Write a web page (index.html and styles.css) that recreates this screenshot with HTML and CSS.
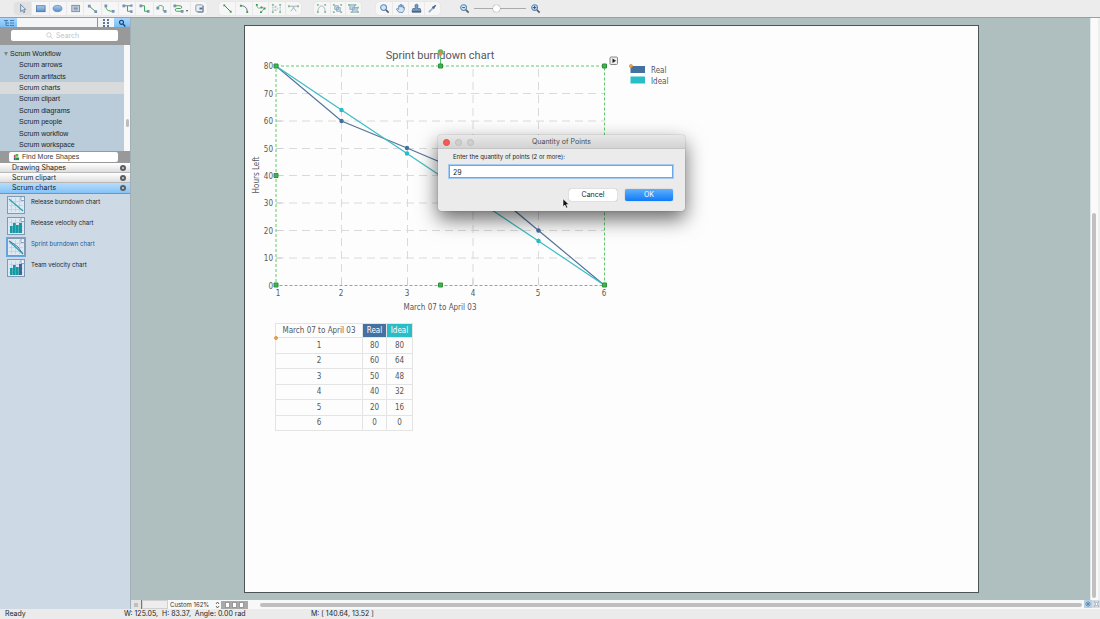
FILE: index.html
```html
<!DOCTYPE html>
<html lang="en">
<head>
<meta charset="utf-8">
<title>Sprint burndown chart</title>
<link rel="stylesheet" href="styles.css">
</head>
<body>
<svg class="defs" aria-hidden="true">
  <defs>
    <linearGradient id="blue" x1="0" y1="0" x2="0" y2="1"><stop offset="0" stop-color="#a9cdf0"/><stop offset="1" stop-color="#5a8fc6"/></linearGradient>
    <symbol id="chart-sheet" viewBox="0 0 18 18">
      <rect x=".5" y=".5" width="17" height="17" fill="#dfe9f3" stroke="#7f98b3"/>
      <path d="M4.500 2v14M8.500 2v14M12.500 2v14M2 5.500h14M2 9.500h14M2 13.500h14" stroke="#b9cde0" stroke-width=".7"/>
      <path d="M14 1v3.500h3.500" fill="#fff" stroke="#6f8db0" stroke-width=".8"/>
    </symbol>
    <symbol id="lens" viewBox="0 0 12 12"><circle cx="5" cy="5" r="3.200" fill="#d5e6f6" stroke="#5b86b4" stroke-width="1.100"/><path d="M7.500 7.500l3 3" stroke="#555f6b" stroke-width="1.700"/></symbol>
  </defs>
</svg>
<div class="app">
  <header class="toolbar">
    <div class="group shapes">
      <button class="on" aria-label="Select"><svg viewBox="0 0 12 12"><path d="M4 1.500v8l2-1.700 1.300 2.700 1.300-.6L7.300 7.300l2.200-.2z" fill="#dfeaf5" stroke="#466a92" stroke-width=".8"/></svg></button>
      <button aria-label="Rectangle"><svg viewBox="0 0 12 12"><rect x="1.500" y="3" width="9.500" height="6.500" fill="url(#blue)" stroke="#3d6da3" stroke-width=".8"/></svg></button>
      <button aria-label="Ellipse"><svg viewBox="0 0 12 12"><ellipse cx="6" cy="6" rx="4.800" ry="3.400" fill="url(#blue)" stroke="#4c7fb5" stroke-width=".8"/></svg></button>
      <button aria-label="Text"><svg viewBox="0 0 12 12"><rect x="2" y="2.500" width="8.500" height="7" fill="#c9d6e4" stroke="#6a7682" stroke-width=".8"/><path d="M4 4.500h4.500M4 6h4.500M4 7.500h4.500" stroke="#68829e" stroke-width=".8"/></svg></button>
      <button aria-label="Line connector"><svg viewBox="0 0 12 12"><path d="M2.500 3.500l7 6" stroke="#35a04b"/><path d="M1 2h3v3H1zM8 8h3v3H8z" fill="#7891b3"/></svg></button>
      <button aria-label="Arc connector"><svg viewBox="0 0 12 12"><path d="M2 3c0 5 3 6 8 6" fill="none" stroke="#35a04b"/><path d="M.5 1.500h3v3h-3zM8.500 7.500h3v3h-3z" fill="#7891b3"/></svg></button>
      <button aria-label="Tree connector"><svg viewBox="0 0 12 12"><path d="M2 3h4v6h4M6 3h4" fill="none" stroke="#35a04b"/><path d="M.5 1.500h3v3h-3zM9 1.500h2.500V4H9zM9 8h2.500v3H9z" fill="#7891b3"/></svg></button>
      <button aria-label="Elbow connector"><svg viewBox="0 0 12 12"><path d="M2 3h4v6h4" fill="none" stroke="#35a04b"/><path d="M.5 1.500h3v3h-3zM8.500 7.500h3v3h-3z" fill="#7891b3"/></svg></button>
      <button aria-label="Round connector"><svg viewBox="0 0 12 12"><path d="M2 5c0-3 6-3 6 0S7 9 10 9" fill="none" stroke="#35a04b"/><path d="M.5 4h3v3h-3zM8.500 7.500h3v3h-3z" fill="#7891b3"/></svg></button>
      <button class="more" aria-label="Smart connector"><svg viewBox="0 0 12 12"><path d="M1 3h7c2 0 2 3 0 3H4C2 6 2 9 4 9h6" fill="none" stroke="#35a04b"/><path d="M.5 1.500h3v3h-3zM8.500 7.500h3v3h-3z" fill="#7891b3"/></svg><i></i></button>
      <button aria-label="Page shape"><svg viewBox="0 0 12 12"><rect x="2" y="2" width="7.500" height="7.500" rx="1" fill="#e8edf2" stroke="#8b98a6"/><path d="M10 3v7H4" fill="none" stroke="#5e7897"/><path d="M6 5h3v2H6z" fill="#4c6c92"/></svg></button>
    </div>
    <div class="group lines">
      <button aria-label="Line"><svg viewBox="0 0 12 12"><path d="M3 3l6 6" stroke="#4d6075"/><path d="M1.500 1.500h2v2h-2zM8.500 8.500h2v2h-2z" fill="#35a04b"/></svg></button>
      <button aria-label="Arc"><svg viewBox="0 0 12 12"><path d="M2 3c5 0 7 3 7 7" fill="none" stroke="#4d6075"/><path d="M1 2h2v2H1zM8 9h2v2H8z" fill="#35a04b"/></svg></button>
      <button aria-label="Spline"><svg viewBox="0 0 12 12"><path d="M2 2c0 5 4 4 5 2l3 2-4 5" fill="none" stroke="#8798a9"/><path d="M1 1h2v2H1zM6 4h2v2H6zM9.500 5h2v2h-2zM5.500 9h2v2h-2z" fill="#35a04b"/></svg></button>
      <button class="dim" aria-label="Distribute"><svg viewBox="0 0 12 12"><path d="M2 1v10M10 1v10M4.500 3l3 3-3 3z" fill="none" stroke="#62808f" stroke-dasharray="2 1"/><path d="M1 1h2v2H1zM1 9h2v2H1zM9 1h2v2H9zM9 9h2v2H9z" fill="#35a04b"/></svg></button>
      <button class="dim" aria-label="Cut line"><svg viewBox="0 0 12 12"><path d="M1 3.500h10M5 4l4 5M7 4L3 9" stroke="#62808f"/><path d="M0 2.500h2v2H0zM10 2.500h2v2h-2z" fill="#35a04b"/></svg></button>
    </div>
    <div class="group edit">
      <button class="dim" aria-label="Edit points"><svg viewBox="0 0 12 12"><path d="M2 10c0-9 8-9 8 0" fill="none" stroke="#62808f"/><path d="M1 1h2v2H1zM9 1h2v2H9zM1 9h2v2H1zM9 9h2v2H9z" fill="#35a04b"/></svg></button>
      <button class="dim" aria-label="Group"><svg viewBox="0 0 12 12"><path d="M3 3h4v4H3zM5 5h4v4H5z" fill="#b7cfe5" stroke="#4d789e"/><path d="M1 1h2v2H1zM9 1h2v2H9zM1 9h2v2H1zM9 9h2v2H9z" fill="#35a04b"/></svg></button>
      <button class="dim" aria-label="Ungroup"><svg viewBox="0 0 12 12"><path d="M2 2h5v5H2zM5 5h5v5H5z" fill="#9dc1dc" stroke="#4d789e"/><path d="M0 1h2v2H0zM7 1h2v2H7zM3 9h2v2H3zM10 9h2v2h-2zM10 4h2v2h-2z" fill="#35a04b"/></svg></button>
    </div>
    <div class="group view">
      <button aria-label="Zoom"><svg viewBox="0 0 12 12"><use href="#lens"/></svg></button>
      <button aria-label="Pan"><svg viewBox="0 0 12 12"><path d="M4 10L1.500 6.500l1-.6L4 7V3l1-.5.5 2 .5-3h1l.3 3 .7-2.200.9.300v3l.6-1.300.8.500c0 3-.8 4-2 5.700z" fill="#d5e5f4" stroke="#4878ab" stroke-width=".8"/></svg></button>
      <button aria-label="Stamp"><svg viewBox="0 0 12 12"><path d="M4.300 3a1.700 1.700 0 0 1 3.400 0L7.200 6H10l1 3H1l1-3h2.800z" fill="#7598bf" stroke="#3c6088" stroke-width=".7"/><path d="M1 9h10v1.500H1z" fill="#3c5370"/></svg></button>
      <button aria-label="Eyedropper"><svg viewBox="0 0 12 12"><path d="M2 10l5-5" stroke="#89afd5" stroke-width="1.800"/><path d="M6 4l2 2M7 5l2.500-2.500" stroke="#4a6485" stroke-width="1.700"/></svg></button>
    </div>
    <div class="zoom">
      <button aria-label="Zoom out"><svg viewBox="0 0 12 12"><use href="#lens"/><path d="M3.500 5h3" stroke="#234f80"/></svg></button>
      <input type="range" aria-label="Zoom level" min="0" max="100" value="42">
      <button aria-label="Zoom in"><svg viewBox="0 0 12 12"><use href="#lens"/><path d="M3 5h4M5 3v4" stroke="#234f80"/></svg></button>
    </div>
  </header>

  <main class="main">
    <aside class="sidebar">
      <div class="tabs">
        <button class="active wide" aria-label="Tree"><svg viewBox="0 0 12 8"><path d="M1 1.500h4M3 1.500v5h3M3 4h3M7 1.500h4M7 4h4M7 6.500h4" fill="none" stroke="#4a7fb4"/></svg></button>
        <span class="blank"></span>
        <button aria-label="Grid"><svg viewBox="0 0 12 8"><path d="M3 0h2v2H3zM7 0h2v2H7zM3 3h2v2H3zM7 3h2v2H7zM3 6h2v2H3zM7 6h2v2H7z" fill="#587896"/></svg></button>
        <button class="active" aria-label="Find"><svg viewBox="0 0 12 8"><circle cx="5.500" cy="3.300" r="2" fill="none" stroke="#174c83" stroke-width="1.200"/><path d="M7 5l2.300 2.500" stroke="#174c83" stroke-width="1.400"/></svg></button>
      </div>
      <div class="search">
        <label><svg viewBox="0 0 8 8"><circle cx="3.300" cy="3.300" r="2.500" fill="none" stroke="#bbb" stroke-width=".8"/><path d="M5.200 5.200l2.300 2.300" stroke="#bbb" stroke-width=".8"/></svg><input type="text" placeholder="Search" aria-label="Search"></label>
      </div>
      <div class="tree">
        <ul>
          <li class="root"><i></i>Scrum Workflow</li>
          <li>Scrum arrows</li>
          <li>Scrum artifacts</li>
          <li class="picked">Scrum charts</li>
          <li>Scrum clipart</li>
          <li>Scrum diagrams</li>
          <li>Scrum people</li>
          <li>Scrum workflow</li>
          <li>Scrum workspace</li>
        </ul>
        <div class="track"><i></i></div>
      </div>
      <div class="find"><button><svg viewBox="0 0 8 8"><path d="M1 1h2v3H1z" fill="#d94b35"/><path d="M3 0h3v3H3z" fill="#55b447"/><path d="M1 4h2v3H1z" fill="#315b9b"/><path d="M3 4h4v3H3z" fill="#2e8b40"/></svg>Find More Shapes</button></div>
      <div class="libs">
        <div>Drawing Shapes<button aria-label="Close Drawing Shapes"><svg viewBox="0 0 6 6"><path d="M2 2l2 2M4 2L2 4" stroke="#ddd" stroke-width=".7"/></svg></button></div>
        <div>Scrum clipart<button aria-label="Close Scrum clipart"><svg viewBox="0 0 6 6"><path d="M2 2l2 2M4 2L2 4" stroke="#ddd" stroke-width=".7"/></svg></button></div>
        <div class="current">Scrum charts<button aria-label="Close Scrum charts"><svg viewBox="0 0 6 6"><path d="M2 2l2 2M4 2L2 4" stroke="#ddd" stroke-width=".7"/></svg></button></div>
      </div>
      <ul class="items">
        <li><svg viewBox="0 0 18 18"><use href="#chart-sheet"/><path d="M2 3l14 12" stroke="#25a6ad" stroke-width="1.300"/></svg>Release burndown chart</li>
        <li><svg viewBox="0 0 18 18"><use href="#chart-sheet"/><path d="M3 9h2.700v7H3zM6 6h2.700v10H6zM9 8h2.700v8H9zM12 6h3v10h-3z" fill="#159aa3"/></svg>Release velocity chart</li>
        <li class="picked"><svg viewBox="0 0 18 18"><use href="#chart-sheet"/><path d="M2 3l14 13" stroke="#25a6ad" stroke-width="1.200"/><path d="M2 3l5 3 4 3 5 7" fill="none" stroke="#5577a4"/></svg>Sprint burndown chart</li>
        <li><svg viewBox="0 0 18 18"><use href="#chart-sheet"/><path d="M3 9h2.700v7H3zM6 6h2.700v10H6zM9 8h2.700v8H9z" fill="#159aa3"/><path d="M12 5h3v11h-3z" fill="#3d6799"/></svg>Team velocity chart</li>
      </ul>
    </aside>

    <section class="work">
      <div class="canvas">
        <div class="paper">
          <svg class="chart" viewBox="250 40 440 280" role="img" aria-label="Sprint burndown chart">
            <g class="grid">
              <path d="M276 93.500h328M276 121h328M276 148.500h328M276 175.500h328M276 203h328M276 230.500h328M276 258h328"/>
              <path d="M341.500 285V66M407.500 285V66M473 285V66M538.500 285V66"/>
            </g>
            <path class="ticks" d="M276 93.500h6M276 121h6M276 148.500h6M276 175.500h6M276 203h6M276 230.500h6M276 258h6M341.500 279v6M407.500 279v6M473 279v6M538.500 279v6"/>
            <path class="line real" d="M276 66l65.500 55 65.500 27 66 28 65.500 54.500L604 285"/>
            <path class="line ideal" d="M276 66l65.500 44 65.500 43.500 66 44 65.500 43.500L604 285"/>
            <g fill="#41709f"><circle cx="341.500" cy="121" r="2.200"/><circle cx="407" cy="148" r="2.200"/><circle cx="538.500" cy="230.500" r="2.200"/></g>
            <g fill="#27bcc6"><circle cx="341.500" cy="110" r="2.200"/><circle cx="407" cy="153.500" r="2.200"/><circle cx="538.500" cy="241" r="2.200"/></g>
            <text class="title" x="440" y="59">Sprint burndown chart</text>
            <g class="ylab"><text x="273" y="69">80</text><text x="273" y="97">70</text><text x="273" y="124">60</text><text x="273" y="152">50</text><text x="273" y="179">40</text><text x="273" y="206">30</text><text x="273" y="234">20</text><text x="273" y="261">10</text><text x="273" y="289">0</text></g>
            <g class="xlab"><text x="278" y="296">1</text><text x="341" y="296">2</text><text x="407" y="296">3</text><text x="473" y="296">4</text><text x="538" y="296">5</text><text x="604" y="296">6</text><text x="440" y="310">March 07 to April 03</text><text transform="translate(259 175) rotate(-90)">Hours Left</text></g>
            <rect class="sel" x="276" y="66" width="328.500" height="219.500"/>
            <path d="M440.500 54v12" stroke="#59c668"/>
            <circle cx="440.500" cy="52" r="2.700" fill="#4ebc60"/><path d="M440.500 50.500l2.700 3-2.700 3-2.700-3z" fill="#e28a42"/>
            <path class="handles" d="M274 64h4v4h-4zM438.500 64h4v4h-4zM602.500 64h4v4h-4zM274 173.500h4v4h-4zM274 283h4v4h-4zM438.500 283h4v4h-4zM602.500 283h4v4h-4z"/>
            <rect x="610" y="57" width="7.500" height="7.500" rx="1" fill="#eee" stroke="#888"/><path d="M612.500 58.500l3.500 2.300-3.500 2.300z" fill="#222"/>
            <rect x="630.500" y="66" width="14.500" height="7" fill="#44719f"/><rect x="630.500" y="76.500" width="14.500" height="7" fill="#29bdc7"/>
            <circle cx="631" cy="66" r="1.600" fill="#f5a544" stroke="#c9832f" stroke-width=".6"/>
            <g class="legend"><text x="651" y="73">Real</text><text x="651" y="84">Ideal</text></g>
          </svg>
          <div class="data">
            <table>
              <thead><tr><th>March 07 to April 03</th><th class="r">Real</th><th class="i">Ideal</th></tr></thead>
              <tbody>
                <tr><td>1</td><td>80</td><td>80</td></tr>
                <tr><td>2</td><td>60</td><td>64</td></tr>
                <tr><td>3</td><td>50</td><td>48</td></tr>
                <tr><td>4</td><td>40</td><td>32</td></tr>
                <tr><td>5</td><td>20</td><td>16</td></tr>
                <tr><td>6</td><td>0</td><td>0</td></tr>
              </tbody>
            </table>
            <i class="pin"></i>
          </div>
        </div>
        <form class="dialog" role="dialog" aria-labelledby="dlg-title">
          <div class="titlebar"><span class="lights"><i></i><i></i><i></i></span><span id="dlg-title">Quantity of Points</span></div>
          <div class="body">
            <label for="qty">Enter the quantity of points (2 or more):</label>
            <input id="qty" type="text" value="29">
            <div class="actions"><button type="button">Cancel</button><button type="button" class="ok">OK</button></div>
          </div>
        </form>
        <svg class="cursor" viewBox="0 0 8 11"><path d="M1 .8v8l1.900-1.700 1.300 3 1.500-.7-1.300-2.800H7z" fill="#111" stroke="#fff" stroke-width=".6"/></svg>
      </div>
      <div class="vscroll"><i></i></div>
      <div class="bottom">
        <button class="pause" aria-label="Pause"><svg viewBox="0 0 8 8"><path d="M3 2v4M5 2v4" stroke="#888" stroke-width=".8"/></svg></button>
        <span class="pagetab"></span>
        <label class="pct"><select aria-label="Zoom"><option>Custom 162%</option></select><svg viewBox="0 0 5 8"><path d="M1 3l1.500-2L4 3M1 5l1.500 2L4 5" fill="none" stroke="#444" stroke-width=".8"/></svg></label>
        <span class="pages"><i></i><i></i><i></i></span>
        <div class="hscroll"><i></i></div>
      </div>
      <div class="corner"><svg viewBox="0 0 16 8"><path d="M0 0h8v8H0z" fill="#b9cfe2"/><path d="M8 0h8v8H8z" fill="#d5dbe0"/><path d="M4 1v6M1 4h6M2 2l4 4M6 2L2 6" stroke="#5583b5" stroke-width=".8"/><path d="M10 2h1M14 2h1M10 6h1M14 6h1" stroke="#8298ac"/><path d="M11.500 2.500h2v3h-2z" fill="#fff" stroke="#8aa7c3" stroke-width=".6"/></svg></div>
    </section>
  </main>

  <footer class="status"><span class="state">Ready</span><span class="dims">W: 125.05,&nbsp; H: 83.37,&nbsp; Angle: 0.00 rad</span><span>M: [ 140.64, 13.52 ]</span></footer>
</div>
</body>
</html>
```

FILE: styles.css
```css
* { box-sizing: border-box; }
body { margin: 0; font: 7px/10px Inter, "Liberation Sans", sans-serif; color: #1c1f24; }
button, input, select { font: inherit; color: inherit; margin: 0; padding: 0; border: 0; background: none; }
button { display: flex; align-items: center; justify-content: center; }
ul { list-style: none; margin: 0; padding: 0; }
svg { display: block; flex: none; }
.defs { position: absolute; width: 0; height: 0; }
.app { display: grid; grid-template-rows: 18px 1fr 10px; height: 100vh; overflow: hidden; }

.toolbar { display: flex; align-items: flex-start; padding: 2px 14px 0; background: #ececec; border-bottom: 1px solid #9c9f9f; }
.group { display: grid; grid-auto-flow: column; grid-auto-columns: 1fr; height: 13px; border-radius: 3px; background: #f6f6f6; box-shadow: 0 0 1px #ccc; }
.group button + button { border-left: 1px solid #e9e9e9; }
.toolbar svg { width: 11px; height: 11px; }
.shapes { width: 193px; grid-template-columns: repeat(9, 1fr) 20px 17px; margin-right: 12px; }
.lines { width: 82px; margin-right: 13px; }
.edit { width: 47px; margin-right: 15px; }
.view { width: 64px; margin-right: 18px; }
.on { background: #e1e1e1; border-radius: 3px 0 0 3px; }
.dim svg { opacity: .6; }
.more i { border: 1px solid transparent; border-top: 2px solid #444; align-self: flex-end; margin: 0 0 2px 2px; }
.zoom { display: flex; align-items: center; height: 13px; gap: 3px; }
.zoom button { width: 13px; }
.zoom input { appearance: none; width: 52px; height: 8px; background: linear-gradient(#aaa, #aaa) center / 100% 1px no-repeat; }
.zoom input::-webkit-slider-thumb { appearance: none; width: 7px; height: 7px; border-radius: 50%; background: #fff; box-shadow: 0 0 1px #555; }

.main { display: grid; grid-template-columns: 131px 1fr; min-height: 0; }
.sidebar { background: #cdd9e5; border-right: 1px solid #a2afb9; min-height: 0; }
.tabs { display: flex; height: 9px; background: #f4f5f6; }
.tabs button { width: 16px; }
.tabs .wide { width: 17px; }
.tabs svg { width: 12px; height: 8px; }
.tabs .active { background: linear-gradient(#a9d6fb, #79bdf5); }
.blank { flex: 1; border-right: 1px solid #8b969f; }
.search { height: 18px; padding: 3px 12px 4px 11px; background: #999; }
.search label { display: flex; align-items: center; justify-content: center; gap: 3px; height: 11px; background: #fff; border-radius: 2px; }
.search svg { width: 7px; height: 7px; }
.search input { width: 27px; height: 10px; outline: 0; }
.search input::placeholder { color: #c4c4c4; opacity: 1; }
.tree { display: flex; height: 106px; background: #bacbd9; font-family: "Liberation Sans", sans-serif; }
.tree ul { flex: 1; display: flex; flex-direction: column; padding-top: 3px; }
.tree li { flex: 1; display: flex; align-items: center; padding-left: 19px; }
.tree .root { padding-left: 4px; gap: 2px; }
.root i { border: 2px solid transparent; border-top: 4px solid #7c8790; border-bottom: 0; }
.tree .picked { background: #d9dadb; }
.track { display: flex; justify-content: center; align-items: flex-start; width: 6px; background: #f8f8f8; padding-top: 74px; }
.track i { width: 3px; height: 8px; border-radius: 2px; background: #bdbdbd; }
.find { height: 12px; padding: 1px 12px 1px 9px; background: #999; font-family: "Liberation Sans", sans-serif; }
.find button { width: 100%; height: 10px; justify-content: flex-start; gap: 2px; padding-left: 4px; background: #fff; border-radius: 2px; color: #3c3c3c; }
.find svg { width: 7px; height: 7px; }
.libs > div { display: flex; align-items: center; justify-content: space-between; height: 10px; padding: 0 4px 0 12px; background: linear-gradient(#fff, #dedede); border-bottom: 1px solid #b8b8b8; }
.libs > .current { height: 11px; background: linear-gradient(#b5dcfb, #84c3f7); border-color: #7895ae; }
.libs button { width: 6px; height: 6px; border-radius: 50%; background: #5b5e62; }
.libs button svg { width: 6px; height: 6px; }
.items { display: flex; flex-direction: column; gap: 3px; padding: 2px 7px; font-size: 6px; line-height: 12px; }
.items li { display: flex; gap: 6px; height: 18px; }
.items svg { width: 18px; height: 18px; }
.items .picked { color: #1f57a0; }
.items .picked svg { box-shadow: 0 0 0 1px #6aa5e0; }

.work { display: grid; grid-template-columns: 1fr 10px; grid-template-rows: 1fr 9px; min-width: 0; min-height: 0; background: #f7f8f8; }
.canvas { position: relative; display: flex; padding: 7px 111px 7px 113px; background: #afbfbf; min-height: 0; overflow: hidden; }
.paper { position: relative; flex: 1; background: #fdfdfd; border: 1px solid #4c5555; }
.chart { position: absolute; left: 5px; top: 14px; width: 440px; height: 280px; }
.chart text { font: 8px "DejaVu Sans Condensed", "DejaVu Sans", sans-serif; fill: #55585c; }
.chart .title { font: 11px Roboto, sans-serif; text-anchor: middle; }
.chart .ylab text { text-anchor: end; }
.chart .xlab text { text-anchor: middle; }
.grid path { fill: none; stroke: #dadada; stroke-dasharray: 8 5; }
.ticks { stroke: #cfcfcf; }
.line { fill: none; stroke-width: 1.2; }
.real { stroke: #54759b; }
.ideal { stroke: #3abdc4; }
.sel { fill: none; stroke: #62c96d; stroke-dasharray: 3 2; }
.handles { fill: #3cb84b; stroke: #2f8f3c; stroke-width: 1; }

.data { position: absolute; left: 30px; top: 297px; }
.data table { border-collapse: collapse; table-layout: fixed; width: 138px; font: 8px/10px "DejaVu Sans Condensed", "DejaVu Sans", sans-serif; color: #55585c; text-align: center; }
.data th, .data td { padding: 0; height: 15px; border: 1px solid #e4e4e4; font-weight: 400; }
.data th { width: 26px; height: 14px; }
.data th:first-child { width: 87px; }
.data .r, .data .i { color: #fff; background: #44719f; }
.data .i { background: #29bdc7; }
.data tbody tr:nth-child(odd) td { height: 16px; }
.data .r { width: 24px; }
.pin { position: absolute; left: -1px; top: 13px; width: 4px; height: 4px; border-radius: 50%; background: #f5a544; border: 1px solid #d9963f; }

.dialog { position: absolute; left: 307px; top: 117px; width: 247px; border-radius: 3px; background: #ebebeb; box-shadow: 0 8px 20px rgba(0, 0, 0, .6), 0 0 1px rgba(0, 0, 0, .6); }
.titlebar { display: grid; grid-template-columns: 40px 1fr 40px; align-items: center; height: 14px; padding-top: 1px; border-bottom: 1px solid #c4c4c4; border-radius: 3px 3px 0 0; background: linear-gradient(#e8e8e8, #d3d3d3); text-align: center; color: #4a4a4a; }
.lights { display: flex; gap: 5px; padding-left: 5px; }
.lights i { width: 7px; height: 7px; border-radius: 50%; background: #cfcfcf; border: 1px solid #bcbcbc; }
.lights i:first-child { background: #f35b54; border-color: #dc4c45; }
.body { display: grid; padding: 3px 12px 10px 11px; }
.body label { padding-left: 4px; font-size: 6px; }
.body input { width: 100%; height: 13px; margin: 3px 0 11px; padding: 1px 3px 0; background: #fff; border: 1px solid #6ba6e6; outline: 1px solid #a6cbf1; }
.actions { display: flex; justify-content: flex-end; gap: 8px; }
.actions button { width: 48px; height: 12px; border-radius: 2px; background: #fff; box-shadow: 0 0 1px #777; }
.actions .ok { color: #fff; background: linear-gradient(#5fb0fb, #0f7bf9); }
.cursor { position: absolute; left: 431px; top: 180px; width: 8px; height: 11px; }

.vscroll { display: flex; justify-content: center; padding: 195px 2px 2px 0; background: linear-gradient(90deg, #e2e8e8 1px, #fafafa 1px 8px, #eee 8px); }
.vscroll i { width: 4px; border-radius: 2px; background: #c1c1c1; }
.bottom { display: flex; align-items: center; background: #f7f9f8; }
.pause { width: 11px; height: 9px; background: #e4e4e4; border-right: 1px solid #777; }
.pause svg { width: 8px; height: 8px; }
.pagetab { width: 26px; height: 9px; border: 1px solid #d0d0d0; background: #ededed; }
.pct { display: flex; align-items: center; width: 52px; padding-left: 2px; color: #333; font-size: 6px; }
.pct select { appearance: none; width: 45px; height: 9px; }
.pct svg { width: 5px; height: 8px; }
.pages { display: flex; justify-content: center; gap: 2px; width: 27px; height: 8px; padding: 1px; margin-left: 1px; background: #a9a9a9; }
.pages i { width: 5px; background: #fff; border: 1px solid #999; }
.hscroll { flex: 1; padding: 0 8px 0 12px; }
.hscroll i { display: block; height: 4px; border-radius: 2px; background: #bfbfbf; }
.corner { position: relative; }
.corner svg { position: absolute; right: 0; top: 0; width: 16px; height: 8px; }

.status { display: flex; padding: 0 5px; line-height: 9px; background: #ebebeb; white-space: pre; }
.state { width: 119px; }
.dims { width: 187px; }
```
